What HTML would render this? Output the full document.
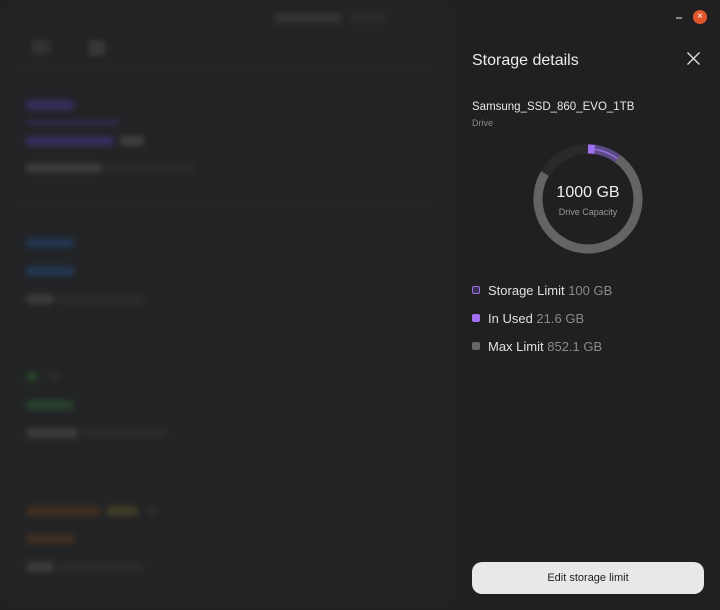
<!DOCTYPE html>
<html><head><style>
*{margin:0;padding:0;box-sizing:border-box}
body{width:720px;height:610px;background:#1e1f21;font-family:"Liberation Sans",sans-serif;overflow:hidden;position:relative}
.main{position:absolute;left:0;top:0;width:456px;height:610px;background:#222325;filter:blur(3px);border-radius:10px}
.b{position:absolute;height:10px;border-radius:3px}
.line{position:absolute;left:12px;width:420px;height:1px;background:#29292b}
.panel{position:absolute;left:456px;top:0;width:264px;height:610px;background:#202022;color:#e8e8e8}
.t{position:absolute}
.sq{position:absolute;left:16px;width:8px;height:8px;border-radius:2px}
.lg{position:absolute;left:32px;font-size:13px;color:#e0e0e0}
.lg span{color:#8a8a8a}
</style></head><body>
<div class="main">
 <div class="b" style="left:275px;top:13px;width:66px;background:#333436"></div>
 <div class="b" style="left:350px;top:13px;width:36px;background:#2a2b2d"></div>
 <div class="b" style="left:32px;top:40px;width:18px;height:14px;background:#323335"></div>
 <div class="b" style="left:88px;top:40px;width:18px;height:16px;background:#353638"></div>
 <div class="line" style="top:66px"></div>
 <div class="b" style="left:26px;top:100px;width:48px;background:#332e5c"></div>
 <div class="b" style="left:26px;top:120px;width:94px;height:5px;background:#2e2b4e"></div>
 <div class="b" style="left:26px;top:136px;width:88px;background:#332e5c"></div>
 <div class="b" style="left:120px;top:136px;width:24px;background:#3d3e40"></div>
 <div class="b" style="left:26px;top:163px;width:76px;background:#3a3b3d"></div>
 <div class="b" style="left:108px;top:163px;width:86px;background:#2a2b2d"></div>
 <div class="line" style="top:202px"></div>
 <div class="b" style="left:26px;top:238px;width:48px;background:#22354f"></div>
 <div class="b" style="left:26px;top:266px;width:48px;background:#22354f"></div>
 <div class="b" style="left:26px;top:294px;width:28px;background:#3a3b3d"></div>
 <div class="b" style="left:58px;top:294px;width:86px;background:#2a2b2d"></div>
 <div class="line" style="top:336px"></div>
 <div class="b" style="left:26px;top:372px;width:12px;background:#28402b"></div>
 <div class="b" style="left:48px;top:372px;width:12px;background:#2a2b2d"></div>
 <div class="b" style="left:26px;top:400px;width:48px;background:#28402b"></div>
 <div class="b" style="left:26px;top:428px;width:52px;background:#3a3b3d"></div>
 <div class="b" style="left:82px;top:428px;width:86px;background:#2a2b2d"></div>
 <div class="line" style="top:472px"></div>
 <div class="b" style="left:26px;top:506px;width:74px;background:#402e22"></div>
 <div class="b" style="left:106px;top:506px;width:32px;background:#403c26"></div>
 <div class="b" style="left:146px;top:506px;width:12px;background:#2a2b2d"></div>
 <div class="b" style="left:26px;top:534px;width:48px;background:#402e22"></div>
 <div class="b" style="left:26px;top:562px;width:28px;background:#3a3b3d"></div>
 <div class="b" style="left:58px;top:562px;width:86px;background:#2a2b2d"></div>
</div>
<div class="panel">
 <div class="t" style="left:220px;top:17px;width:6px;height:2px;background:#888"></div>
 <div class="t" style="left:237px;top:10px;width:14px;height:14px;border-radius:50%;background:#e0552a;color:#fff;font-size:10px;line-height:14px;text-align:center">×</div>
 <div class="t" style="left:16px;top:52px;font-size:16px;color:#ececec">Storage details</div>
 <svg class="t" style="left:231px;top:52px" width="13" height="13"><path d="M0.5 0.5L12.5 12.5M12.5 0.5L0.5 12.5" stroke="#ddd" stroke-width="1.4"/></svg>
 <div class="t" style="left:16px;top:101px;font-size:11.5px;color:#e8e8e8">Samsung_SSD_860_EVO_1TB</div>
 <div class="t" style="left:16px;top:118px;font-size:9px;color:#888">Drive</div>
 <svg class="t" style="left:76px;top:143px" width="112" height="112" viewBox="0 0 112 112">
  <circle cx="56" cy="56" r="55" fill="#2a2a2c"/>
  <circle cx="56" cy="56" r="45" fill="#202022"/>
  <circle cx="56" cy="56" r="50" fill="none" stroke="#646466" stroke-width="9" stroke-dasharray="230.4 314.16" transform="rotate(-54 56 56)"/>
  <circle cx="56" cy="56" r="50" fill="none" stroke="#5a4a85" stroke-width="9" stroke-dasharray="31.4 314.16" transform="rotate(-90 56 56)"/>
  <circle cx="56" cy="56" r="50" fill="none" stroke="#a070f0" stroke-width="9" stroke-dasharray="6.8 314.16" transform="rotate(-90 56 56)"/>
  <path d="M56 6 A50 50 0 0 1 85.4 15.6" fill="none" stroke="#9a70e0" stroke-width="1.5"/>
 </svg>
 <div class="t" style="left:76px;width:112px;text-align:center;top:184px;font-size:16px;color:#f0f0f0">1000 GB</div>
 <div class="t" style="left:76px;width:112px;text-align:center;top:207px;font-size:9px;color:#999">Drive Capacity</div>
 <div class="sq" style="top:286px;border:1.5px solid #9a70e0;background:#3a2f55"></div>
 <div class="lg" style="top:283px">Storage Limit <span>100 GB</span></div>
 <div class="sq" style="top:314px;background:#a070f0"></div>
 <div class="lg" style="top:311px">In Used <span>21.6 GB</span></div>
 <div class="sq" style="top:342px;background:#666668"></div>
 <div class="lg" style="top:339px">Max Limit <span>852.1 GB</span></div>
 <div class="t" style="left:16px;top:562px;width:232px;height:32px;border-radius:10px;background:#e8e8ea;color:#222;font-size:11px;line-height:32px;text-align:center">Edit storage limit</div>
</div>
</body></html>
